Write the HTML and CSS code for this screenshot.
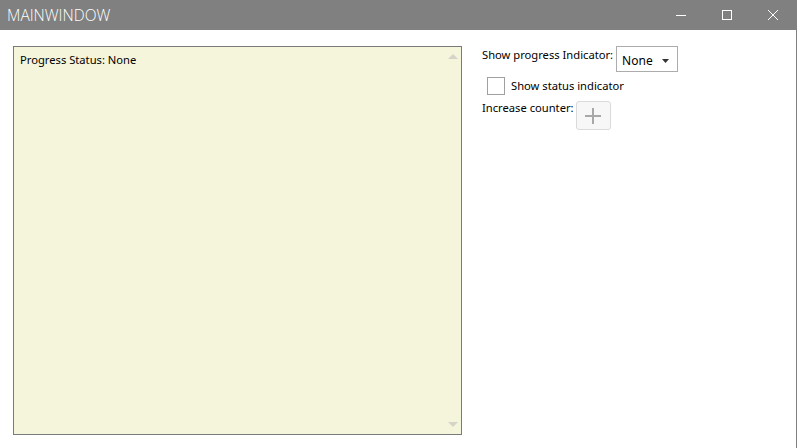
FILE: index.html
```html
<!DOCTYPE html>
<html>
<head>
<meta charset="utf-8">
<link rel="stylesheet" href="styles.css">
</head>
<body>
<div class="window">
  <div class="titlebar">
    <div class="title">MAINWINDOW</div>
    <div class="controls">
      <div class="ctl"><svg width="12" height="12" viewBox="0 0 12 12"><line x1="1" y1="6.5" x2="11" y2="6.5" stroke="#fff" stroke-width="1"/></svg></div>
      <div class="ctl"><svg width="12" height="12" viewBox="0 0 12 12"><rect x="1.5" y="1.5" width="9" height="9" fill="none" stroke="#fff" stroke-width="1"/></svg></div>
      <div class="ctl"><svg width="12" height="12" viewBox="0 0 12 12"><path d="M1 1 L11 11 M11 1 L1 11" stroke="#fff" stroke-width="1"/></svg></div>
    </div>
  </div>
  <div class="content">
    <div class="textbox">
      <div class="tb-text">Progress Status: None</div>
      <div class="scroll">
        <svg class="arr" width="10" height="6" viewBox="0 0 10 6"><path d="M0 6 L5 1 L10 6 Z" fill="#d4d4c8"/></svg>
        <svg class="arr" width="10" height="6" viewBox="0 0 10 6"><path d="M0 0 L5 5 L10 0 Z" fill="#d4d4c8"/></svg>
      </div>
    </div>
    <div class="panel">
      <div class="row row1">
        <span class="label">Show progress Indicator:</span>
        <div class="combo"><span>None</span><svg width="7" height="4" viewBox="0 0 7 4"><path d="M0 0 L7 0 L3.5 4 Z" fill="#333"/></svg></div>
      </div>
      <div class="row row2">
        <div class="check"></div>
        <span class="label2">Show status indicator</span>
      </div>
      <div class="row row3">
        <span class="label label3">Increase counter:</span>
        <div class="btn"><svg width="18" height="18" viewBox="0 0 18 18"><path d="M9 1 V17 M1 9 H17" stroke="#a8a8a8" stroke-width="2"/></svg></div>
      </div>
    </div>
  </div>
</div>
</body>
</html>
```
FILE: styles.css
```css
html, body { margin: 0; padding: 0; background: #fff; }
.window {
  width: 797px; height: 448px; box-sizing: border-box;
  border-right: 1px solid #808080;
  font-family: "Noto Sans", "Open Sans", sans-serif;
  font-size: 11.2px; color: #000;
  overflow: hidden;
}
.titlebar {
  height: 30px; background: #808080; display: flex; align-items: center;
  justify-content: space-between;
}
.title {
  font-family: "Open Sans", sans-serif; font-weight: 300; font-size: 15.5px;
  color: #fff; padding-left: 7px; letter-spacing: 0;
}
.controls { display: flex; height: 30px; }
.ctl { width: 46px; height: 30px; display: flex; align-items: center; justify-content: center; }
.content { display: flex; padding: 16px 0 0 13px; }
.textbox {
  width: 449px; height: 389px; box-sizing: border-box;
  border: 1px solid #7a7a7a; background: #f5f5dc;
  display: flex; justify-content: space-between;
}
.tb-text { padding: 5px 0 0 6px; line-height: 16px; }
.scroll {
  width: 17px; display: flex; flex-direction: column; justify-content: space-between;
  align-items: center; padding: 6px 0 6px 0;
}
.panel { margin-left: 20px; display: flex; flex-direction: column; }
.row { display: flex; }
.row1 { align-items: flex-start; }
.label { padding-top: 1px; line-height: 16px; }
.label3 { padding-top: 0; margin-top: -1px; }
.combo {
  margin-left: 3px; margin-top: 0; width: 62px; height: 26px; box-sizing: border-box;
  border: 1px solid #acacac; background: #fff; display: flex; align-items: center;
  justify-content: space-between; padding: 3px 8px 0 5px;
}
.combo span { font-size: 12px; }
.row2 { margin-top: 5px; margin-left: 5px; align-items: center; }
.check { width: 18px; height: 18px; box-sizing: border-box; border: 1px solid #a0a0a0; background: #fff; }
.label2 { margin-left: 6px; line-height: 16px; }
.row3 { margin-top: 6px; align-items: flex-start; }
.btn {
  margin-left: 2px; margin-top: 0; width: 35px; height: 29px; box-sizing: border-box;
  border: 1px solid #dadada; border-radius: 3px; background: #f7f7f7;
  display: flex; align-items: center; justify-content: center;
}
```
